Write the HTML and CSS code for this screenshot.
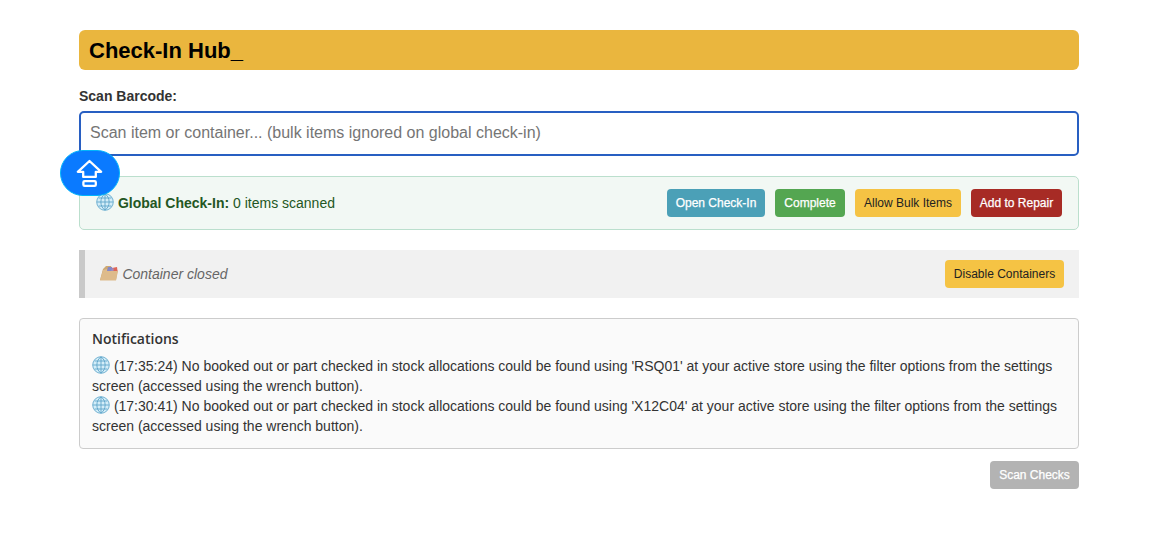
FILE: index.html
```html
<!DOCTYPE html>
<html lang="en">

<head>
    <meta charset="UTF-8">
    <meta name="viewport" content="width=device-width, initial-scale=1.0">
    <title>Check-In Hub</title>
    <link rel="stylesheet" href="styles.css">
</head>

<body>
    <svg class="symbols" aria-hidden="true">
        <symbol id="globe" viewBox="0 0 18 18">
            <circle cx="9" cy="9" r="8.3" fill="#d3edf8" stroke="#72b2d2"/>
            <path d="M9 1v16M1 9h16M2.5 5h13M2.5 13h13M9 1C3.5 4 3.5 14 9 17M9 1c5.5 3 5.5 13 0 16" fill="none" stroke="#5fa5ca" stroke-width=".9"/>
        </symbol>
    </svg>

    <div class="container">
        <h1>Check-In Hub_</h1>

        <label for="barcode">Scan Barcode:</label>
        <div class="scan-field">
            <input type="text" id="barcode" placeholder="Scan item or container... (bulk items ignored on global check-in)">
            <button class="caps-badge" aria-label="Caps lock">
                <svg width="28" height="29" viewBox="0 0 28 29">
                    <path d="M13.5 2L1.8 12.8h5.4v5.1h12.6v-5.1h5.4z"/>
                    <rect x="7.4" y="22.1" width="12.4" height="4.8" rx="1.2"/>
                </svg>
            </button>
        </div>

        <div class="global-info">
            <div class="status"><svg class="globe"><use href="#globe"/></svg> <strong>Global Check-In:</strong> <span id="itemCount">0</span> items scanned</div>
            <div class="actions">
                <button class="btn btn-open">Open Check-In</button>
                <button class="btn btn-complete">Complete</button>
                <button class="btn btn-bulk">Allow Bulk Items</button>
                <button class="btn btn-repair">Add to Repair</button>
            </div>
        </div>

        <div class="container-info">
            <div class="container-status">
                <svg class="folder" width="18" height="15" viewBox="0 0 18 15">
                    <path d="M0 14L3 3l3-3h5l1 3 5 1 .6 1L16 14z" fill="#cda873"/>
                    <path d="M8 1h4l1 4H7z" fill="#8588c8"/>
                    <path d="M12 2l5-1 .6 5H13z" fill="#df6556"/>
                    <path d="M12 2.3l2 .2-.6 2.5H11z" fill="#a18bc0"/>
                    <path d="M0 14.5L3 4l4-1v2h11l-2 9.5z" fill="#debb8b"/>
                </svg>
                <em>Container closed</em>
            </div>
            <button class="btn btn-bulk btn-containers">Disable Containers</button>
        </div>

        <div class="notifications">
            <h2>Notifications</h2>
            <p><svg class="globe"><use href="#globe"/></svg> (17:35:24) No booked out or part checked in stock allocations could be found using 'RSQ01' at your active store using the filter options from the settings screen (accessed using the wrench button).</p>
            <p><svg class="globe"><use href="#globe"/></svg> (17:30:41) No booked out or part checked in stock allocations could be found using 'X12C04' at your active store using the filter options from the settings screen (accessed using the wrench button).</p>
        </div>

        <div class="footer">
            <button class="btn btn-checks" disabled>Scan Checks</button>
        </div>
    </div>
</body>

</html>
```

FILE: styles.css
```css
* {
    box-sizing: border-box;
}

body {
    font-family: "Liberation Sans", Arial, sans-serif;
    font-size: 14px;
    line-height: 20px;
    color: #333;
    background-color: #fff;
    margin: 0;
}

.symbols {
    display: none;
}

.container {
    width: 1000px;
    margin: 30px 0 0 79px;
}

h1 {
    font-size: 22px;
    font-weight: bold;
    line-height: 38px;
    color: #000;
    background-color: #eab63e;
    border-radius: 6px;
    margin: 0 0 16px;
    padding: 2px 10px 0;
}

label {
    display: block;
    font-weight: bold;
    margin-bottom: 5px;
}

.scan-field {
    position: relative;
    height: 45px;
    margin-bottom: 20px;
}

input[type="text"] {
    display: block;
    width: 100%;
    height: 45px;
    padding: 0 9px 2px;
    border: 2px solid #285fc2;
    border-radius: 5px;
    background-color: #fff;
    font-family: inherit;
    font-size: 16px;
    outline: none;
}

input::placeholder {
    color: #757575;
    opacity: 1;
}

.caps-badge {
    position: absolute;
    left: -19px;
    top: 39px;
    display: flex;
    align-items: center;
    justify-content: center;
    width: 60px;
    height: 46px;
    padding: 0;
    border: 1px solid #00b5fb;
    border-radius: 23px;
    background-color: #0a7aff;
}

.caps-badge svg {
    fill: none;
    stroke: #fff;
    stroke-width: 2.3;
    stroke-linejoin: round;
}

.global-info {
    display: flex;
    align-items: center;
    justify-content: space-between;
    height: 54px;
    padding: 0 16px;
    color: #235723;
    background-color: #f2f8f4;
    border: 1px solid #bbdfcd;
    border-radius: 5px;
    margin-bottom: 20px;
}

.globe {
    width: 18px;
    height: 18px;
    vertical-align: -3px;
}

.actions {
    display: flex;
    gap: 10px;
}

.btn {
    height: 28px;
    padding: 0;
    border: none;
    border-radius: 4px;
    font-family: inherit;
    font-size: 12px;
    color: #fff;
    -webkit-text-stroke: 0.25px;
    cursor: pointer;
}

.btn-open {
    width: 98px;
    background-color: #4ba0b7;
}

.btn-complete {
    width: 70px;
    background-color: #54a651;
}

.btn-bulk {
    width: 106px;
    color: #222;
    background-color: #f5c344;
    -webkit-text-stroke: 0;
}

.btn-repair {
    width: 91px;
    background-color: #a72b25;
}

.btn-containers {
    width: 119px;
}

.container-info {
    display: flex;
    align-items: center;
    justify-content: space-between;
    height: 48px;
    padding: 0 15px;
    color: #666;
    background-color: #f1f1f1;
    border-left: 6px solid #c9c9c9;
    margin-bottom: 20px;
}

.folder {
    margin-right: 0.5px;
    vertical-align: -2px;
}

.notifications {
    height: 131px;
    padding: 10px 12px;
    background-color: #fafafa;
    border: 1px solid #ccc;
    border-radius: 4px;
}

h2 {
    font-family: "Open Sans", sans-serif;
    font-size: 14px;
    font-weight: 600;
    line-height: 20px;
    margin: 0 0 7px;
}

.notifications p {
    margin: 0;
}

.footer {
    display: flex;
    justify-content: flex-end;
    margin-top: 12px;
}

.btn-checks {
    width: 89px;
    background-color: #b3b3b3;
}
```
